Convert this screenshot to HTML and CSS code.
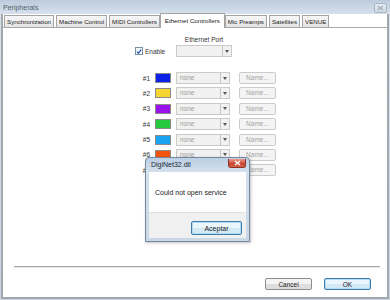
FILE: index.html
```html
<!DOCTYPE html>
<html lang="en">
<head>
  <meta charset="UTF-8" />
  <title>Peripherals</title>
  <link rel="stylesheet" href="styles.css">
</head>
<body>
  <div class="window">
    <div class="titlebar">
      <span>Peripherals</span>
      <span class="close">
        <svg width="7" height="6" viewBox="0 0 7 6"><path d="M1 1L6 5M6 1L1 5" stroke="#8d9aa8" stroke-width="1" fill="none"/></svg>
      </span>
    </div>

    <div class="client">
      <div class="tabs">
        <span class="tab">Synchronization</span>
        <span class="tab">Machine Control</span>
        <span class="tab">MIDI Controllers</span>
        <span class="tab on">Ethernet Controllers</span>
        <span class="tab">Mic Preamps</span>
        <span class="tab">Satellites</span>
        <span class="tab">VENUE</span>
      </div>

      <section class="panel">
        <div class="port">
          <span></span>
          <span class="port-label">Ethernet Port</span>
          <label class="enable">
            <span class="check">
              <svg width="7" height="7" viewBox="0 0 7 7"><path d="M1 3.6L2.8 5.5L6 1.2" stroke="#2456b8" stroke-width="1.4" fill="none"/></svg>
            </span>
            Enable
          </label>
          <span class="combo"><span class="val"></span><span class="arrow"></span></span>
        </div>

        <div class="rows">
          <span class="num">#1</span><span class="swatch" style="background:#0b22e6"></span>
          <span class="combo"><span class="val">none</span><span class="arrow"></span></span><span class="name">Name...</span>

          <span class="num">#2</span><span class="swatch" style="background:#f6d533"></span>
          <span class="combo"><span class="val">none</span><span class="arrow"></span></span><span class="name">Name...</span>

          <span class="num">#3</span><span class="swatch" style="background:#9a12ea"></span>
          <span class="combo"><span class="val">none</span><span class="arrow"></span></span><span class="name">Name...</span>

          <span class="num">#4</span><span class="swatch" style="background:#24c93c"></span>
          <span class="combo"><span class="val">none</span><span class="arrow"></span></span><span class="name">Name...</span>

          <span class="num">#5</span><span class="swatch" style="background:#1aa3f0"></span>
          <span class="combo"><span class="val">none</span><span class="arrow"></span></span><span class="name">Name...</span>

          <span class="num">#6</span><span class="swatch" style="background:#f2550d"></span>
          <span class="combo"><span class="val">none</span><span class="arrow"></span></span><span class="name">Name...</span>

          <span class="num">#7</span><span class="swatch" style="background:#e83c8c"></span>
          <span class="combo"><span class="val">none</span><span class="arrow"></span></span><span class="name">Name...</span>
        </div>
      </section>

      <div class="footer">
        <div class="sep"></div>
        <div class="buttons">
          <button class="btn">Cancel</button>
          <button class="btn def">OK</button>
        </div>
      </div>
    </div>

    <!-- error popup over the dialog -->
    <div class="dialog">
      <div class="dlg-title">
        <span>DigiNet32.dll</span>
        <span class="dlg-close">
          <svg width="7" height="6" viewBox="0 0 7 6"><path d="M1 1L6 5M6 1L1 5" stroke="#fff" stroke-width="1.4" fill="none"/></svg>
        </span>
      </div>
      <div class="dlg-body">Could not open service</div>
      <div class="dlg-foot">
        <button class="btn def wide">Aceptar</button>
      </div>
    </div>
  </div>
</body>
</html>
```

FILE: styles.css
```css
*{box-sizing:border-box;}
body{
  margin:0;
  width:390px;
  height:300px;
  overflow:hidden;
  font-family:"Liberation Sans",Arial,sans-serif;
  font-size:6.5px;
  color:#2a2a2a;
}
.window{
  position:relative;
  height:300px;
  display:flex;
  flex-direction:column;
  background:linear-gradient(#bccbdc,#d7e1ec 14px,#ccd7e3);
  padding:0 1px 1px;
}
.titlebar{
  height:14px;
  flex:none;
  display:flex;
  align-items:center;
  justify-content:space-between;
  padding:0 2px 0 2px;
  font-size:7px;
  color:#4e5d6e;
}
.close{
  width:13px;
  height:10px;
  margin-top:2px;
  border:1px solid #aab6c4;
  border-radius:2px;
  background:linear-gradient(#e3eaf2,#cfd9e4);
  display:flex;
  align-items:center;
  justify-content:center;
}
.client{
  flex:1;
  display:flex;
  flex-direction:column;
  background:#fff;
  border:2px solid #a2a8b0;
  border-top:0;
}

/* tabs */
.tabs{
  height:14px;
  flex:none;
  display:flex;
  align-items:flex-end;
  border-bottom:1px solid #a9a9a9;
  padding-left:1px;
}
.tab{
  height:12px;
  line-height:11px;
  padding:0 2px;
  margin-right:2px;
  border:1px solid #a4a4a4;
  border-bottom:0;
  background:linear-gradient(#f7f7f7,#e4e4e4);
  font-size:6.2px;
  color:#222;
  white-space:nowrap;
}
.tab.on{
  height:15px;
  line-height:13px;
  padding:0 4px;
  margin:0 0 -1px -2px;
  background:#fff;
  position:relative;
}

/* panel */
.panel{flex:1;}
.port{
  display:grid;
  grid-template-columns:41px 56px;
  grid-template-rows:9px 12px;
  row-gap:1px;
  align-items:center;
  margin:7px 0 0 132px;
}
.port-label{text-align:center;color:#333;}
.enable{display:flex;align-items:center;gap:2px;color:#333;}
.check{
  width:8px;
  height:8px;
  border:1px solid #7b8da6;
  background:linear-gradient(#eef3fa,#fff);
  display:flex;
  align-items:center;
  justify-content:center;
}
.combo{
  height:12px;
  display:flex;
  border:1px solid #cacaca;
  background:#f1f1f1;
  color:#9a9a9a;
}
.combo .val{flex:1;line-height:10px;padding-left:3px;}
.combo .arrow{
  width:9px;
  border-left:1px solid #c6c6c6;
  display:flex;
  align-items:center;
  justify-content:center;
}
.combo .arrow::after{
  content:"";
  border-left:2px solid transparent;
  border-right:2px solid transparent;
  border-top:3px solid #555;
}
.rows{
  display:grid;
  grid-template-columns:14px 16px 54px 41px;
  grid-auto-rows:12px;
  column-gap:5px;
  row-gap:3.4px;
  align-items:center;
  margin:15px 0 0 133px;
}
.num{text-align:right;color:#333;}
.swatch{
  height:10px;
  border:1px solid #8a8a8a;
}
.name{
  margin-left:4px;
  height:12px;
  line-height:10px;
  text-align:center;
  border:1px solid #cbcbcb;
  border-radius:2px;
  background:#f4f4f4;
  color:#a4a4a4;
}

/* footer */
.footer{flex:none;}
.sep{
  height:2px;
  margin:0 7px 0 11px;
  border-top:1px solid #a8a8a8;
  border-bottom:1px solid #e8e8e8;
}
.buttons{
  display:flex;
  justify-content:flex-end;
  gap:12px;
  padding:10px 16px 7px 0;
}
.btn{
  width:47px;
  height:12px;
  padding:0;
  border:1px solid #8c8c8c;
  border-radius:2px;
  background:linear-gradient(#f4f4f4 50%,#dedede 50%);
  font-family:"Liberation Sans",Arial,sans-serif;
  font-size:6.5px;
  color:#222;
}
.btn.def{
  border-color:#3d7bad;
  box-shadow:inset 0 0 0 1px #b3dcf3;
  background:linear-gradient(#eaf5fc 50%,#d4e9f6 50%);
}
.btn.wide{width:51px;height:14px;font-size:7px;}

/* popup */
.dialog{
  position:absolute;
  left:145px;
  top:157px;
  width:105px;
  display:flex;
  flex-direction:column;
  padding:0 3px 3px;
  border:1px solid #75889e;
  border-radius:4px 4px 0 0;
  background:linear-gradient(#bccfe4,#d3e0ed 14px,#c9d7e6);
  box-shadow:1px 1px 3px rgba(0,0,0,.25);
}
.dlg-title{
  height:14px;
  display:flex;
  align-items:flex-start;
  justify-content:space-between;
  padding:3px 0 0 2px;
  font-size:7px;
  color:#1c2733;
}
.dlg-close{
  width:18px;
  height:9px;
  margin-top:-2px;
  border:1px solid #8d3224;
  border-top:0;
  border-radius:0 0 3px 3px;
  background:linear-gradient(#eaa08f,#c9422e 60%,#d9654e);
  display:flex;
  align-items:center;
  justify-content:center;
}
.dlg-body{
  height:40px;
  display:flex;
  align-items:center;
  padding-left:6px;
  background:#fff;
  font-size:7px;
  color:#222;
}
.dlg-foot{
  height:26px;
  display:flex;
  justify-content:flex-end;
  padding:8px 4px 0 0;
  background:#f0f0f0;
  border-top:1px solid #e2e2e2;
}
```
